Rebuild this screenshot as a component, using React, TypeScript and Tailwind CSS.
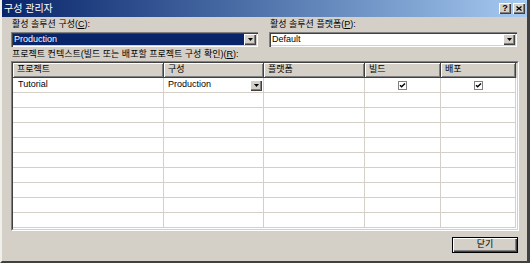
import React from "react";

const columns = [
  { key: "project", label: "프로젝트", width: "w-[151px]" },
  { key: "config", label: "구성", width: "w-[100px]" },
  { key: "platform", label: "플랫폼", width: "w-[101px]" },
  { key: "build", label: "빌드", width: "w-[76px]" },
  { key: "deploy", label: "배포", width: "w-[75px]" },
];

const EMPTY_ROWS = 9;

function ArrowButton() {
  return (
    <div className="flex h-[11px] w-[12px] shrink-0 items-center justify-center bg-[#D4D0C8] shadow-[inset_1px_1px_0_#fff,inset_-1px_-1px_0_#404040,inset_-2px_-2px_0_#808080]">
      <svg width="5" height="3" viewBox="0 0 5 3">
        <path d="M0 0h5L2.5 3z" fill="#000" />
      </svg>
    </div>
  );
}

function Combo({ value, selected }: { value: string; selected?: boolean }) {
  return (
    <div className="flex h-[15px] items-center bg-white p-[2px] shadow-[inset_1px_1px_0_#808080,inset_2px_2px_0_#404040,inset_-1px_-1px_0_#fff,inset_-2px_-2px_0_#D4D0C8]">
      <div
        className={`h-[11px] flex-1 pl-[1px] text-[9px] leading-[11px] ${
          selected ? "bg-[#0A246A] text-white" : "text-black"
        }`}
      >
        {value}
      </div>
      <ArrowButton />
    </div>
  );
}

function Check() {
  return (
    <svg width="9" height="9" viewBox="0 0 9 9">
      <rect x="0.5" y="0.5" width="8" height="8" fill="#fff" stroke="#808080" />
      <path d="M2 4.2l1.6 1.6L7 2.4" stroke="#000" strokeWidth="1.4" fill="none" />
    </svg>
  );
}

function TitleButton({ children }: { children: React.ReactNode }) {
  return (
    <div className="flex h-[11px] w-[12px] items-center justify-center bg-[#D4D0C8] shadow-[inset_1px_1px_0_#fff,inset_-1px_-1px_0_#404040,inset_-2px_-2px_0_#808080]">
      {children}
    </div>
  );
}

export default function App() {
  return (
    <div className="flex h-[263px] w-[530px] flex-col border-b-2 border-l-2 border-r-[3px] border-b-[#404040] border-l-[#F1EFE9] border-r-[#404040] bg-[#D4D0C8] font-['Liberation_Sans','Noto_Sans_CJK_KR',sans-serif] text-black">
      {/* title bar */}
      <div className="flex h-[17px] shrink-0 items-center justify-between bg-gradient-to-r from-[#0A246A] to-[#A6CAF0] pl-[2px] pr-[2px]">
        <span className="text-[10px] leading-none text-white">구성 관리자</span>
        <div className="flex gap-[2px]">
          <TitleButton>
            <span className="text-[9px] font-bold leading-none">?</span>
          </TitleButton>
          <TitleButton>
            <svg width="6" height="5" viewBox="0 0 6 5">
              <path d="M0.5 0.5l5 4M5.5 0.5l-5 4" stroke="#000" strokeWidth="1.3" />
            </svg>
          </TitleButton>
        </div>
      </div>

      <div className="flex flex-1 flex-col pl-[9px] pr-[8px]">
        <div className="grid grid-cols-[247px_248px] gap-x-[11px]">
          <div>
            <div className="h-[15px] pl-[1px] text-[9px] leading-[15px]">
              활성 솔루션 구성(<span className="underline">C</span>):
            </div>
            <Combo value="Production" selected />
          </div>
          <div>
            <div className="h-[15px] pl-[1px] text-[9px] leading-[15px]">
              활성 솔루션 플랫폼(<span className="underline">P</span>):
            </div>
            <Combo value="Default" />
          </div>
        </div>

        <div className="h-[14px] pl-[1px] text-[9px] leading-[14px]">
          프로젝트 컨텍스트(빌드 또는 배포할 프로젝트 구성 확인)(<span className="underline">R</span>):
        </div>

        {/* project grid */}
        <div className="h-[170px] w-[508px] border border-b-white border-l-[#808080] border-r-white border-t-[#808080]">
          <div className="h-full overflow-hidden border border-b-[#D4D0C8] border-l-[#404040] border-r-[#D4D0C8] border-t-[#404040] bg-white">
            <div className="flex h-[15px]">
              {columns.map((c) => (
                <div
                  key={c.key}
                  className={`${c.width} h-[15px] border-b border-r border-[#404040] bg-[#D4D0C8] pl-[4px] text-[9px] leading-[13px] shadow-[inset_1px_1px_0_#fff,inset_-1px_-1px_0_#808080]`}
                >
                  {c.label}
                </div>
              ))}
              <div className="h-[15px] flex-1 bg-[#D4D0C8]" />
            </div>

            <div className="flex h-[15px] text-[9px]">
              <div className="flex w-[151px] items-center border-b border-r border-[#D4D0C8] pl-[5px]">
                Tutorial
              </div>
              <div className="flex w-[100px] items-center justify-between border-b border-r border-[#D4D0C8] pl-[4px] pr-[1px]">
                <span>Production</span>
                <ArrowButton />
              </div>
              <div className="w-[101px] border-b border-r border-[#D4D0C8]" />
              <div className="flex w-[76px] items-center justify-center border-b border-r border-[#D4D0C8]">
                <Check />
              </div>
              <div className="flex w-[75px] items-center justify-center border-b border-r border-[#D4D0C8]">
                <Check />
              </div>
            </div>

            {Array.from({ length: EMPTY_ROWS }).map((_, i) => (
              <div key={i} className="flex h-[15px]">
                {columns.map((c) => (
                  <div key={c.key} className={`${c.width} border-b border-r border-[#D4D0C8]`} />
                ))}
              </div>
            ))}
          </div>
        </div>

        <div className="mt-[6px] flex justify-end pr-[1px]">
          <div className="h-[16px] w-[66px] border border-black">
            <div className="flex h-full items-center justify-center bg-[#D4D0C8] text-[9px] shadow-[inset_1px_1px_0_#fff,inset_-1px_-1px_0_#404040,inset_-2px_-2px_0_#808080]">
              닫기
            </div>
          </div>
        </div>
      </div>
    </div>
  );
}
